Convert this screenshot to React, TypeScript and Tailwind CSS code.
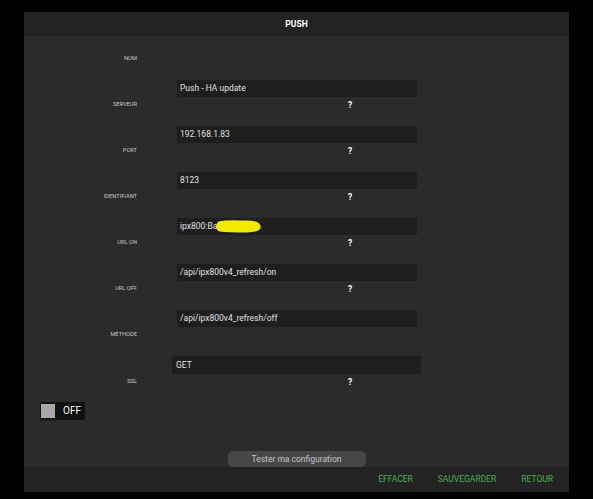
import { ReactNode } from "react";

type Field = {
  label: string;
  help: boolean;
  value?: ReactNode;
};

const fields: Field[] = [
  { label: "NOM", help: false, value: "Push - HA update" },
  { label: "SERVEUR", help: true, value: "192.168.1.83" },
  { label: "PORT", help: true, value: "8123" },
  { label: "IDENTIFIANT", help: true, value: "ipx800:Ba" },
  { label: "URL ON", help: true, value: "/api/ipx800v4_refresh/on" },
  { label: "URL OFF", help: true, value: "/api/ipx800v4_refresh/off" },
];

function LabelRow({ label, help }: { label: string; help: boolean }) {
  return (
    <div className="flex h-4 items-center">
      <div className="w-[113px] text-right text-[5.7px] leading-none text-[#c8c8c8]">{label}</div>
      {help && <div className="ml-[211px] text-[8.5px] font-bold leading-none text-white">?</div>}
    </div>
  );
}

function Scribble() {
  // yellow marker used to hide the rest of the login
  return (
    <svg className="absolute left-[38px] top-[1px] h-[15px] w-[48px]" viewBox="0 0 48 15">
      <path
        d="M4 4 C12 2 24 3 32 3 C38 3 43 4 44 7 C45 10 40 12 32 12 C22 12 12 12 5 11 C2 10 2 6 4 4 Z"
        fill="#f4ea00"
        stroke="#f4ea00"
        strokeWidth="3"
        strokeLinejoin="round"
      />
    </svg>
  );
}

export default function App() {
  return (
    <div className="min-h-[499px] bg-black pt-3 font-['Roboto',sans-serif]">
      <div className="mx-6 bg-[#2b2b2b]">
        <div className="flex h-6 items-center justify-center bg-[#232323] text-[8.5px] font-bold text-white">PUSH</div>

        <div className="pt-[15px]">
          {fields.map((f) => (
            <div key={f.label}>
              <LabelRow label={f.label} help={f.help} />
              <div className="relative ml-[153px] mt-[13px] flex h-[17px] w-[240px] items-center bg-[#1e1e1e] pl-[3px] text-[8.5px] text-[#e0e0e0]">
                {f.value}
                {f.label === "IDENTIFIANT" && <Scribble />}
              </div>
            </div>
          ))}

          <LabelRow label="MÉTHODE" help={false} />
          <div className="ml-[148px] mt-[13px] flex h-[18px] w-[249px] items-center bg-[#1e1e1e] pl-[4px] text-[8.5px] text-[#e0e0e0]">
            GET
          </div>

          <LabelRow label="SSL" help={true} />
          <div className="ml-4 mt-3 flex h-[18px] w-[45px] items-center gap-2 bg-[#111111] pl-[1px]">
            <div className="h-[14px] w-[14px] bg-[#a8a8a8]" />
            <span className="text-[10px] leading-none text-white">OFF</span>
          </div>

          <div className="mt-[31px] flex justify-center">
            <button className="h-4 w-[138px] rounded-[5px] bg-[#474747] text-[8.5px] leading-none text-[#c4c4c4]">
              Tester ma configuration
            </button>
          </div>
        </div>

        <div className="flex h-[25px] items-center justify-end gap-[25px] bg-[#232323] pr-4 text-[8.5px] text-[#4caf50]">
          <button>EFFACER</button>
          <button>SAUVEGARDER</button>
          <button>RETOUR</button>
        </div>
      </div>
    </div>
  );
}
